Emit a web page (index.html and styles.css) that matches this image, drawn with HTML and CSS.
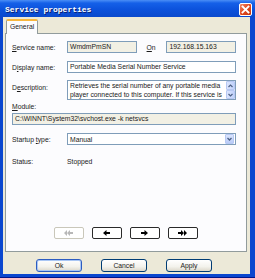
FILE: index.html
```html
<!DOCTYPE html>
<html lang="en">
<head>
    <meta charset="UTF-8">
    <title>Service properties</title>
    <link rel="stylesheet" href="styles.css">
</head>
<body>
    <div class="window">
        <div class="titlebar">
            <span class="title">Service properties</span>
            <span class="close">
                <svg width="13" height="13" viewBox="0 0 13 13">
                    <path d="M3.5 3.5l6 6M9.5 3.5l-6 6" stroke="#fff" stroke-width="1.8" stroke-linecap="square"/>
                </svg>
            </span>
        </div>
        <div class="client">
            <div class="tabs">
                <span class="tab">General</span>
            </div>
            <div class="panel">
                <div class="row">
                    <span class="lbl"><u>S</u>ervice name:</span>
                    <div class="field ro short">WmdmPmSN</div>
                    <span class="lbl-on"><u>O</u>n</span>
                    <div class="field ro short">192.168.15.163</div>
                </div>
                <div class="row row-display">
                    <span class="lbl">D<u>i</u>splay name:</span>
                    <div class="field wide">Portable Media Serial Number Service</div>
                </div>
                <div class="row row-desc">
                    <span class="lbl lbl-desc">D<u>e</u>scription:</span>
                    <div class="desc">
                        <div class="desc-text">Retrieves the serial number of any portable media player connected to this computer. If this service is</div>
                        <div class="scroll">
                            <span class="sbtn">
                                <svg width="5" height="4" viewBox="0 0 5 4"><path d="M0.5 3L2.5 1l2 2" fill="none" stroke="#4d6185" stroke-width="1.2"/></svg>
                            </span>
                            <span class="sbtn">
                                <svg width="5" height="4" viewBox="0 0 5 4"><path d="M0.5 1l2 2 2-2" fill="none" stroke="#4d6185" stroke-width="1.2"/></svg>
                            </span>
                        </div>
                    </div>
                </div>
                <div class="module-lbl"><u>M</u>odule:</div>
                <div class="field ro module">C:\WINNT\System32\svchost.exe -k netsvcs</div>
                <div class="row row-startup">
                    <span class="lbl">Startup <u>t</u>ype:</span>
                    <div class="select">
                        <span class="select-val">Manual</span>
                        <span class="drop">
                            <svg width="5" height="4" viewBox="0 0 5 4"><path d="M0.5 1l2 2 2-2" fill="none" stroke="#4d6185" stroke-width="1.3"/></svg>
                        </span>
                    </div>
                </div>
                <div class="row row-status">
                    <span class="lbl">Status:</span>
                    <span>Stopped</span>
                </div>
                <div class="nav">
                    <span class="nbtn disabled">
                        <svg width="9" height="6" viewBox="0 0 9 6"><path d="M9 2H6V0L3 3l3 3V4h3zM3 0L0 3l3 3z" fill="#b8b8b8"/></svg>
                    </span>
                    <span class="nbtn">
                        <svg width="7" height="6" viewBox="0 0 7 6"><path d="M7 2H3.5V0L0 3l3.5 3V4H7z" fill="#000"/></svg>
                    </span>
                    <span class="nbtn">
                        <svg width="7" height="6" viewBox="0 0 7 6"><path d="M0 2h3.5V0L7 3 3.5 6V4H0z" fill="#000"/></svg>
                    </span>
                    <span class="nbtn">
                        <svg width="9" height="6" viewBox="0 0 9 6"><path d="M0 2h3V0l3 3-3 3V4H0zM6 0l3 3-3 3z" fill="#000"/></svg>
                    </span>
                </div>
            </div>
            <div class="buttons">
                <span class="btn default">Ok</span>
                <span class="btn">Cancel</span>
                <span class="btn">Apply</span>
            </div>
        </div>
    </div>
</body>
</html>
```

FILE: styles.css
```css
* {
    box-sizing: border-box;
}
body {
    margin: 0;
    width: 255px;
    height: 278px;
    overflow: hidden;
    font-family: "Liberation Sans", Arial, sans-serif;
    font-size: 6.8px;
    color: #1a1a1a;
}
u {
    text-decoration-thickness: 0.6px;
    text-underline-offset: 1px;
}
.window {
    height: 278px;
    display: flex;
    flex-direction: column;
    background: #0b47cf;
    padding: 0 5px 3px 3px;
    border-bottom: 1px solid #00148a;
}
.titlebar {
    height: 17px;
    margin: 0 -5px 0 -3px;
    padding: 0 3px 0 5px;
    display: flex;
    align-items: center;
    justify-content: space-between;
    background: linear-gradient(#4a8ef6 0%, #1560e8 18%, #0c52dc 55%, #0a49cc 100%);
}
.title {
    font-family: "Liberation Mono", "DejaVu Sans Mono", monospace;
    font-weight: bold;
    font-size: 8px;
    color: #fff;
    text-shadow: 1px 1px 0 #0a2170;
    margin-top: 2px;
}
.close {
    width: 13px;
    height: 13px;
    margin-top: 1px;
    border: 1px solid #fff;
    border-radius: 2px;
    background: linear-gradient(135deg, #f08a6a, #e0471f 50%, #c2360f);
    display: flex;
    align-items: center;
    justify-content: center;
}
.close svg {
    margin: -1px;
}
.client {
    flex: 1;
    background: #ece9d8;
    padding: 2px 3px 0 2px;
    display: flex;
    flex-direction: column;
}
.tabs {
    display: flex;
    height: 14px;
}
.tab {
    margin-left: 1px;
    height: 15px;
    padding: 0 3px;
    background: #fcfcfe;
    border: 1px solid #919b9c;
    border-top: 2px solid #f7b63d;
    border-bottom: none;
    border-radius: 2px 2px 0 0;
    line-height: 11px;
    position: relative;
    z-index: 1;
}
.panel {
    height: 219px;
    border: 1px solid #919b9c;
    background: #fcfcfe;
    padding: 7px 10px 12px 6px;
    display: flex;
    flex-direction: column;
}
.row {
    display: flex;
    align-items: center;
}
.lbl {
    width: 55px;
    flex: none;
}
.lbl-on {
    width: 30px;
    padding-left: 10px;
}
.field {
    height: 12px;
    border: 1px solid #7f9db9;
    background: #fff;
    padding: 0 2px;
    line-height: 10px;
    white-space: nowrap;
    overflow: hidden;
}
.field.ro {
    background: #f2f0e4;
}
.field.short {
    width: 70px;
}
.field.wide {
    flex: 1;
}
.row-display {
    margin-top: 8px;
}
.row-desc {
    margin-top: 7px;
    align-items: flex-start;
}
.lbl-desc {
    padding-top: 4px;
    line-height: 8px;
}
.desc {
    flex: 1;
    height: 20px;
    border: 1px solid #7f9db9;
    background: #fff;
    display: flex;
}
.desc-text {
    flex: 1;
    padding: 1px 2px 0 2px;
    line-height: 8.6px;
    overflow: hidden;
}
.scroll {
    width: 9px;
    display: flex;
    flex-direction: column;
    gap: 0;
    background: #f4f3ee;
}
.sbtn {
    flex: 1;
    border: 1px solid #b7c9f3;
    border-radius: 1px;
    background: linear-gradient(90deg, #dbe5fd, #c1d2fb);
    display: flex;
    align-items: center;
    justify-content: center;
}
.module-lbl {
    margin-top: 3px;
    line-height: 8px;
}
.field.module {
    margin-top: 2px;
}
.row-startup {
    margin-top: 8px;
}
.select {
    flex: 1;
    height: 12px;
    border: 1px solid #7f9db9;
    background: #fff;
    display: flex;
    align-items: center;
    padding: 0 1px 0 2px;
}
.select-val {
    flex: 1;
}
.drop {
    width: 9px;
    height: 10px;
    border: 1px solid #b7c9f3;
    border-radius: 1px;
    background: linear-gradient(#dbe5fd, #b9cbf8);
    display: flex;
    align-items: center;
    justify-content: center;
}
.row-status {
    margin-top: 13px;
    line-height: 8px;
}
.nav {
    margin-top: auto;
    display: flex;
    justify-content: center;
    gap: 8px;
    padding-left: 3px;
}
.nbtn {
    width: 30px;
    height: 12px;
    border: 1px solid #2a2a2a;
    border-radius: 2px;
    background: #fff;
    display: flex;
    align-items: center;
    justify-content: center;
}
.nbtn.disabled {
    border-color: #c9c7ba;
}
.buttons {
    flex: 1;
    display: flex;
    justify-content: center;
    gap: 19px;
    padding: 7px 4px 0 0;
}
.btn {
    width: 46px;
    height: 13px;
    border: 1px solid #003c74;
    border-radius: 3px;
    background: linear-gradient(#ffffff, #f3f2ec 60%, #dcd8cb);
    text-align: center;
    line-height: 11px;
}
.btn.default {
    border-color: #2c5cc0;
    box-shadow: inset 0 0 0 1px #a9c6f4;
}
```
